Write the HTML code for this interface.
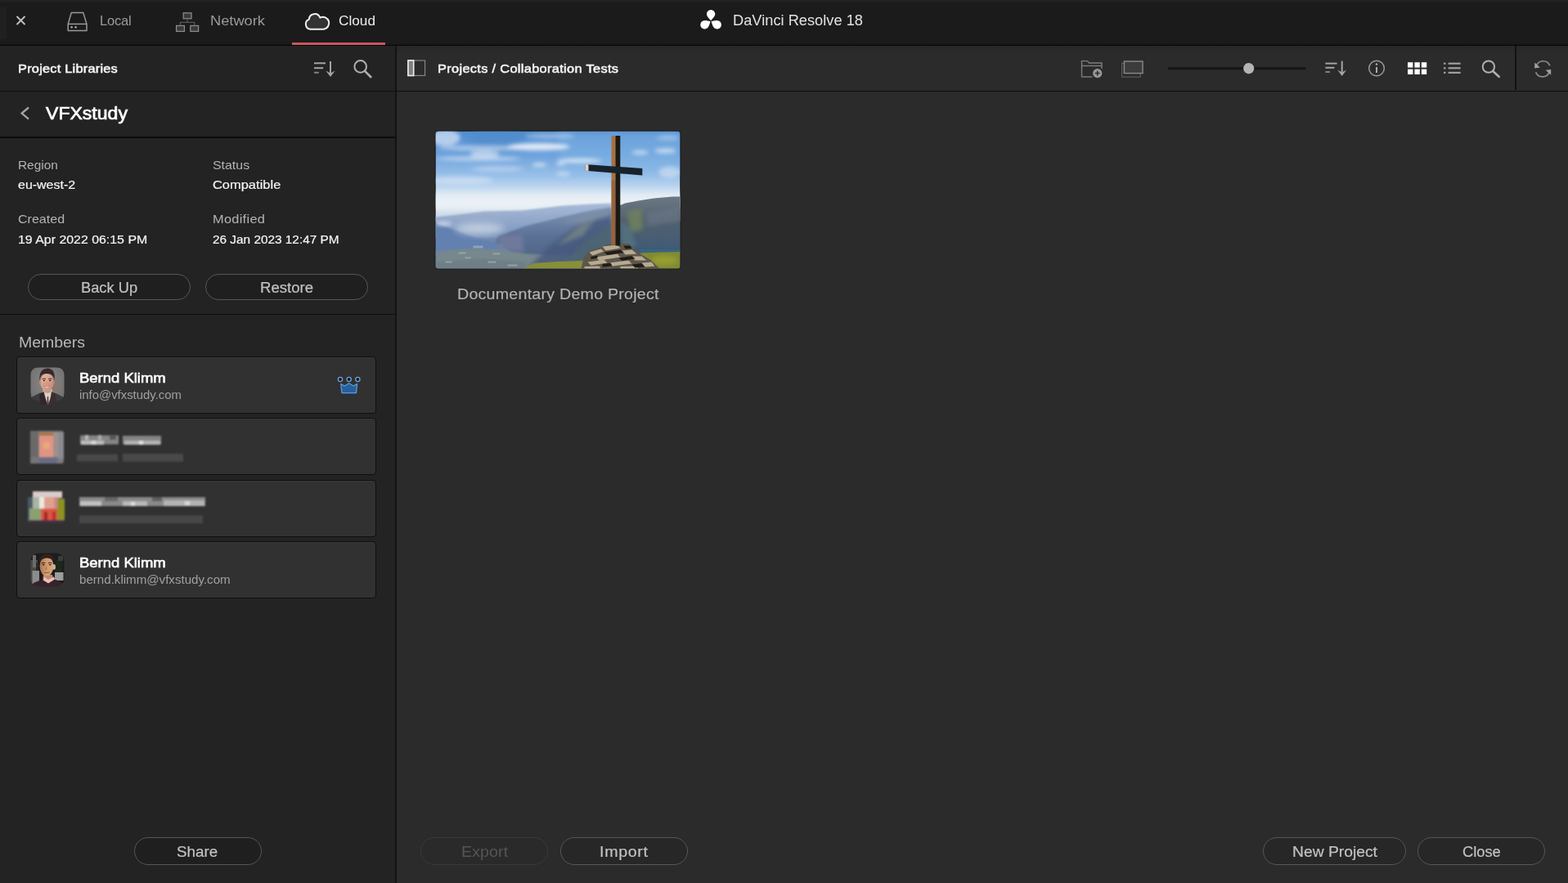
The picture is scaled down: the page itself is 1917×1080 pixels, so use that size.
<!DOCTYPE html>
<html lang="en"><head><meta charset="utf-8"><title>DaVinci Resolve 18</title>
<style>
html,body{margin:0;padding:0;}
body{width:1917px;height:1080px;overflow:hidden;background:#2b2b2b;position:relative;font-family:"Liberation Sans",sans-serif;}
.a{position:absolute;}
.t{position:absolute;white-space:pre;transform-origin:0 0;font-family:"Liberation Sans",sans-serif;}
svg{position:absolute;overflow:visible;}
.btn{position:absolute;box-sizing:border-box;border:1.8px solid #565656;border-radius:17px;height:33.4px;background:#1f1f1f;}
.card{position:absolute;box-sizing:border-box;left:20px;width:440px;height:70px;border:1.5px solid #0e0e0e;border-radius:4px;background:#313131;box-shadow:inset 0 1px 0 rgba(255,255,255,.035);}

</style></head>
<body>
<!-- panels -->
<div class="a" style="left:0;top:56px;width:483px;height:1024px;background:#232323"></div>
<div class="a" style="left:485px;top:56px;width:1432px;height:1024px;background:#2b2b2b"></div>
<div class="a" style="left:485px;top:56px;width:1432px;height:10px;background:linear-gradient(#272727,#2b2b2b)"></div>
<div class="a" style="left:483px;top:56px;width:2px;height:1024px;background:#121212"></div>
<!-- title bar -->
<div class="a" style="left:0;top:0;width:1917px;height:56px;background:#1b1b1b"></div>
<div class="a" style="left:0;top:0;width:1917px;height:4px;background:linear-gradient(#242424,#1b1b1b)"></div>
<div class="a" style="left:0;top:52px;width:1917px;height:3px;background:linear-gradient(#1b1b1b,#161616)"></div>
<div class="a" style="left:0;top:54.7px;width:1917px;height:1.3px;background:#070707"></div>
<div class="a" style="left:357px;top:51.5px;width:114.2px;height:3.2px;background:#cb5560"></div>
<!-- left strip --><div class="a" style="left:0;top:8px;width:8px;height:40px;background:#202020"></div>
<!-- header separators -->
<div class="a" style="left:0;top:110.5px;width:1917px;height:1.5px;background:#0f0f0f"></div>
<div class="a" style="left:0;top:167.3px;width:483px;height:1.5px;background:#0c0c0c"></div>
<div class="a" style="left:0;top:383.6px;width:483px;height:1.5px;background:#0e0e0e"></div>
<div class="a" style="left:1852px;top:56px;width:2px;height:54px;background:#121212"></div>
<!-- buttons -->
<div class="btn" style="left:34px;top:335px;width:199px;height:32px;border-radius:16px"></div>
<div class="btn" style="left:251px;top:335px;width:199px;height:32px;border-radius:16px"></div>
<div class="btn" style="left:164px;top:1024.3px;width:156px"></div>
<div class="btn" style="left:514px;top:1024.3px;width:156px;background:#2a2a2a;border-color:#393939"></div>
<div class="btn" style="left:685px;top:1024.3px;width:156px;background:#272727"></div>
<div class="btn" style="left:1544px;top:1024.3px;width:175px;background:#272727"></div>
<div class="btn" style="left:1733px;top:1024.3px;width:156px;background:#272727"></div>
<!-- cards -->
<div class="card" style="top:436px"></div>
<div class="card" style="top:511.3px"></div>
<div class="card" style="top:586.7px"></div>
<div class="card" style="top:662px"></div>

<!--ICONS-->
<svg class="a" style="left:530.6px;top:158.6px" width="302" height="171" viewBox="-1.5 -1.5 302 171">
<defs>
<clipPath id="tc"><rect x="0" y="0" width="299" height="168" rx="3.5"/></clipPath>
<linearGradient id="sky" x1="0" y1="0" x2="0" y2="100" gradientUnits="userSpaceOnUse">
<stop offset="0" stop-color="#528dd1"/><stop offset="0.3" stop-color="#6ea3dc"/><stop offset="0.56" stop-color="#9cc2ea"/><stop offset="0.76" stop-color="#d2e2f2"/><stop offset="0.9" stop-color="#e4ecf4"/><stop offset="1" stop-color="#cfdbe8"/>
</linearGradient>
<linearGradient id="far" x1="0" y1="88" x2="0" y2="128" gradientUnits="userSpaceOnUse">
<stop offset="0" stop-color="#a9bbd6"/><stop offset="1" stop-color="#7d96c0"/>
</linearGradient>
<linearGradient id="mid" x1="0" y1="95" x2="0" y2="168" gradientUnits="userSpaceOnUse">
<stop offset="0" stop-color="#7d93b6"/><stop offset="0.45" stop-color="#5b7196"/><stop offset="1" stop-color="#4b6080"/>
</linearGradient>
<linearGradient id="rm" x1="0" y1="80" x2="0" y2="150" gradientUnits="userSpaceOnUse">
<stop offset="0" stop-color="#6d7884"/><stop offset="0.4" stop-color="#536270"/><stop offset="1" stop-color="#3e5876"/>
</linearGradient>
<filter id="b2" x="-20%" y="-80%" width="140%" height="260%"><feGaussianBlur stdDeviation="2.4"/></filter>
<filter id="b1" x="-10%" y="-10%" width="120%" height="120%"><feGaussianBlur stdDeviation="1.1"/></filter>
<filter id="b05" x="-10%" y="-10%" width="120%" height="120%"><feGaussianBlur stdDeviation=".5"/></filter>
<filter id="b4" x="-30%" y="-100%" width="160%" height="300%"><feGaussianBlur stdDeviation="4.5"/></filter>
</defs>
<rect x="-1" y="-1" width="301" height="170" rx="4.5" fill="#1c1c1c"/>
<g clip-path="url(#tc)">
<rect x="0" y="100" width="299" height="68" fill="#7086a8"/>
<rect x="0" y="0" width="299" height="110" fill="url(#sky)"/>
<ellipse cx="75" cy="10" rx="35" ry="14" fill="#4f8acb" opacity=".7" filter="url(#b4)"/>
<rect x="150" y="0" width="150" height="50" fill="#86b8e6" opacity=".45" filter="url(#b4)"/>
<!-- clouds -->
<g fill="#f2f4fb" filter="url(#b2)">
<ellipse cx="12" cy="8" rx="18" ry="10" opacity=".6"/>
<ellipse cx="60" cy="20.5" rx="56" ry="3.2" opacity=".5"/>
<ellipse cx="126" cy="19" rx="38" ry="4.6" opacity=".85"/>
<ellipse cx="176" cy="36" rx="27" ry="2.6" opacity=".75"/>
<ellipse cx="60" cy="28" rx="18" ry="4.5" opacity=".55"/>
<ellipse cx="52" cy="33.5" rx="52" ry="2.8" opacity=".55"/>
<ellipse cx="76" cy="46" rx="32" ry="3.5" opacity=".35"/>
<ellipse cx="127" cy="41" rx="9" ry="2.2" opacity=".7"/>
<ellipse cx="153" cy="40" rx="6" ry="2" opacity=".6"/>
<ellipse cx="156" cy="52" rx="9" ry="2.8" opacity=".5"/>
<ellipse cx="140" cy="6" rx="30" ry="3" opacity=".4"/>
<ellipse cx="250" cy="26" rx="10" ry="2.8" opacity=".6"/>
<ellipse cx="281" cy="24" rx="13" ry="3.2" opacity=".6"/>
<ellipse cx="284" cy="8" rx="14" ry="3" opacity=".35"/>
<ellipse cx="286" cy="50" rx="13" ry="7" opacity=".45"/>
<ellipse cx="30" cy="60" rx="40" ry="5" opacity=".4"/>
</g>
<!-- horizon haze -->
<rect x="-10" y="76" width="320" height="20" fill="#eef3f7" opacity=".7" filter="url(#b4)"/>
<!-- far ridge -->
<path d="M0 105 L27 102 L60 98 L106 97 L156 91 L190 89 L215 88 L215 130 L0 130 Z" fill="url(#far)" filter="url(#b1)"/>
<!-- mid ridge -->
<path d="M60 168 L77 128 L110 116 L150 106 L185 98 L215 93 L215 168 Z" fill="url(#mid)" filter="url(#b1)"/>
<!-- left slope -->
<path d="M0 113 L10 116 L27 122 L50 131 L80 138 L95 150 L0 152 Z" fill="#6280b0" filter="url(#b1)"/>
<ellipse cx="54" cy="119" rx="30" ry="7" fill="#c8d4e0" opacity=".85" filter="url(#b4)"/>
<ellipse cx="10" cy="113" rx="10" ry="2.5" fill="#dfe6f2" opacity=".8" filter="url(#b2)"/>
<path d="M77 128 L106 127 L108 148 L76 146 Z" fill="#7a7fa0" opacity=".7" filter="url(#b2)"/>
<!-- valley -->
<path d="M0 147 L40 143 L80 145 L112 150 L160 152 L215 150 L215 168 L0 168 Z" fill="#77878e" filter="url(#b1)"/>
<path d="M0 160 L60 156 L110 160 L110 168 L0 168 Z" fill="#6c7e84" opacity=".8" filter="url(#b1)"/>
<g fill="#b4c0c2" opacity=".55" filter="url(#b05)">
<rect x="28" y="148" width="9" height="2"/><rect x="12" y="159" width="8" height="2"/><rect x="46" y="140" width="12" height="3"/><rect x="64" y="159" width="10" height="2"/><rect x="88" y="163" width="12" height="2"/><rect x="36" y="154" width="7" height="1.6"/><rect x="70" y="149" width="9" height="1.8"/>
</g>
<!-- dark ridges center-right -->
<path d="M112 168 L140 140 L170 118 L200 104 L215 100 L215 168 Z" fill="#46597e" opacity=".8" filter="url(#b2)"/>
<path d="M150 168 L185 132 L215 112 L215 168 Z" fill="#4e6672" opacity=".85" filter="url(#b2)"/>
<path d="M148 140 L175 116 L196 106 L180 128 Z" fill="#7c8c84" opacity=".7" filter="url(#b2)"/>
<path d="M150 112 L190 100 L214 96 L214 104 L180 112 Z" fill="#7f90a4" opacity=".8" filter="url(#b2)"/>
<!-- right mountain -->
<path d="M222 92 L232 88 L248 85 L267 82 L290 80 L299 80 L299 152 L222 152 Z" fill="url(#rm)" filter="url(#b05)"/>
<path d="M234 98 L252 94 L254 120 L238 124 Z" fill="#72845c" opacity=".75" filter="url(#b2)"/>
<path d="M226 112 L236 116 L246 140 L228 146 Z" fill="#5a7c84" opacity=".6" filter="url(#b2)"/>
<path d="M258 100 L299 92 L299 110 L258 116 Z" fill="#6c7888" opacity=".6" filter="url(#b2)"/>
<rect x="250" y="144.5" width="50" height="4" fill="#356a82" opacity=".8" filter="url(#b05)"/>
<!-- grass -->
<path d="M106 168 L120 161.5 L148 159.5 L190 158 L190 168 Z" fill="#878f38" filter="url(#b05)"/>
<path d="M250 149 L275 148 L299 147.6 L299 168 L250 168 Z" fill="#818a30" filter="url(#b05)"/>
<ellipse cx="280" cy="158" rx="16" ry="6" fill="#9aa232" opacity=".8" filter="url(#b2)"/>
<!-- rocks -->
<path d="M178 168 L181 155 L187 147 L198 143 L213 137.5 L236 137.5 L240 141.5 L251 150.5 L263 157.5 L274 168 Z" fill="#5e564a"/>
<g fill="#b6aa92" filter="url(#b05)">
<path d="M188 148 L202 144 L206 147 L192 152 Z"/><path d="M204 141 L222 139 L226 143 L208 146 Z"/><path d="M196 154 L222 150 L226 154 L200 158 Z"/><path d="M186 160 L206 157 L210 161 L190 164 Z"/><path d="M212 161 L236 158 L240 162 L216 165 Z"/><path d="M228 146 L240 145 L246 150 L232 151 Z"/><path d="M238 153 L252 153 L258 158 L244 158 Z"/><path d="M252 161 L264 160 L268 165 L256 166 Z"/><path d="M182 165.5 L200 165 L202 168 L182 168 Z"/><path d="M226 165.5 L246 165 L248 168 L226 168 Z"/>
</g>
<g fill="#221d19" filter="url(#b05)">
<path d="M206 148 L226 145 L230 148.6 L210 151.6 Z"/><path d="M224 155 L240 152.5 L244 156 L228 158.6 Z"/><path d="M204 162.6 L214 161 L216 165 L204 166 Z"/><path d="M240 163 L252 161.6 L256 166 L244 167 Z"/><path d="M230 140 L238 140 L240 143.6 L232 144 Z"/><path d="M190 153.4 L198 152 L198 155 L190 156.6 Z"/>
</g>
<!-- cross -->
<rect x="215" y="5.5" width="5.2" height="133" fill="#a8703f"/>
<rect x="215" y="60" width="5.2" height="78" fill="#8c5a3a" opacity=".6"/>
<rect x="220" y="5.5" width="5.8" height="134.5" fill="#1b1913"/>
<path d="M183 40.4 L252.8 45.6 L252.8 54 L183 48.2 Z" fill="#17222b"/>
<path d="M183 40.4 L187 40.7 L187 48.5 L183 48.2 Z" fill="#e6cfc8"/>
</g>
</svg>
<!-- avatar 1 -->
<svg class="a" style="left:37px;top:449px" width="42" height="47" viewBox="0 0 42 47">
<defs><clipPath id="a1"><path d="M10 0.5 H32 Q41.5 0.5 41.5 10 V31 Q41.5 41.5 32 41.5 H27.5 V46 H11 V41.5 H10 Q0.5 41.5 0.5 31 V10 Q0.5 0.5 10 0.5 Z"/></clipPath>
<filter id="ab" x="-10%" y="-10%" width="120%" height="120%"><feGaussianBlur stdDeviation=".55"/></filter>
<linearGradient id="sk1" x1="0" y1="0" x2="1" y2="1"><stop offset="0" stop-color="#e8bba2"/><stop offset="1" stop-color="#c48a76"/></linearGradient>
<radialGradient id="bg1" cx=".5" cy=".4" r=".7"><stop offset="0" stop-color="#8a8a8a"/><stop offset="1" stop-color="#6c6c6c"/></radialGradient>
</defs>
<g clip-path="url(#a1)"><g filter="url(#ab)">
<rect width="42" height="47" fill="url(#bg1)"/>
<rect x="27.5" y="15" width="8" height="15" fill="#8c7466" opacity=".6"/>
<path d="M-2 47 L1 37 L12 31.5 L30 31.5 L41 37 L44 47 Z" fill="#3b3b40"/>
<path d="M15.5 27 H26.5 L27 33 L21.5 46 L16 34 Z" fill="#dccfc8"/>
<path d="M16.5 27 H25.5 V30.5 Q21 33 16.5 30.5 Z" fill="#c79a86"/>
<path d="M11.5 33 L16.5 30 L21 47 H11.5 Z" fill="#33282a"/><path d="M31 33 L26 30 L23 47 H31 Z" fill="#3c2e2c"/>
<path d="M20.8 36 L22.2 36 L22.6 47 L20.2 47 Z" fill="#55433e"/>
<ellipse cx="20.4" cy="18.4" rx="8" ry="10.8" fill="url(#sk1)"/>
<ellipse cx="12.3" cy="18.5" rx="1.2" ry="2.4" fill="#c88f7c"/><ellipse cx="28.4" cy="18.5" rx="1.2" ry="2.4" fill="#c08672"/>
<ellipse cx="17" cy="21" rx="2.6" ry="2" fill="#e48a84" opacity=".55"/><ellipse cx="24.2" cy="21" rx="2.4" ry="2" fill="#dc8880" opacity=".5"/>
<path d="M14.4 14.6 Q16.8 13.2 19 14.6" stroke="#4a3028" stroke-width="1" fill="none"/><path d="M22 14.6 Q24.2 13.2 26.6 14.6" stroke="#4a3028" stroke-width="1" fill="none"/>
<ellipse cx="16.8" cy="16.4" rx="1.3" ry=".8" fill="#3a2824"/><ellipse cx="24.2" cy="16.4" rx="1.3" ry=".8" fill="#3a2824"/>
<path d="M20.4 17 L19.4 21.4 H21.6 Z" fill="#c98c78" opacity=".7"/>
<path d="M16.4 23.2 Q20.5 27.6 24.6 23.2 Q20.5 24.6 16.4 23.2Z" fill="#fbf3f0" stroke="#a85a56" stroke-width=".5"/>
<path d="M11.6 17 Q10 2 21 1.4 Q31.4 2 29.4 16 Q28.6 9.6 24 8.4 Q17 7 13.6 10 Q12 12.6 11.6 17 Z" fill="#3a282a"/>
</g></g>
</svg>
<!-- avatar 2 (pixelated) -->
<svg class="a" style="left:36px;top:525px" width="44" height="44" viewBox="0 0 44 44">
<defs><filter id="pb" x="-10%" y="-10%" width="120%" height="120%"><feGaussianBlur stdDeviation="1"/></filter></defs>
<g filter="url(#pb)">
<rect x="1" y="2" width="41" height="40" rx="3" fill="#7c7c7c"/>
<rect x="1" y="2" width="10" height="40" fill="#6a6a6a"/>
<rect x="12" y="4" width="17" height="6" fill="#a87848"/>
<rect x="12" y="8" width="17" height="26" fill="#e09484"/>
<rect x="17" y="16" width="8" height="8" fill="#e8a878"/>
<rect x="29" y="4" width="6" height="30" fill="#a0908c"/>
<rect x="35" y="4" width="7" height="32" fill="#8a8a92"/>
<rect x="12" y="34" width="22" height="8" fill="#6a6c84"/>
<rect x="1" y="34" width="11" height="8" fill="#747478"/>
</g>
</svg>
<!-- avatar 3 (pixelated) -->
<svg class="a" style="left:32px;top:598px" width="50" height="46" viewBox="0 0 50 46">
<g filter="url(#pb)">
<rect x="8" y="3" width="36" height="8" fill="#d8cccc"/>
<rect x="2" y="10" width="8" height="30" fill="#4a5a68"/>
<rect x="8" y="10" width="10" height="14" fill="#a8b4a4"/>
<rect x="16" y="10" width="8" height="22" fill="#ece8e0"/>
<rect x="22" y="10" width="12" height="14" fill="#e0a090"/>
<rect x="34" y="10" width="6" height="14" fill="#d08888"/>
<rect x="38" y="12" width="9" height="26" fill="#8e9222"/>
<rect x="4" y="24" width="14" height="14" fill="#8aa070"/>
<rect x="18" y="24" width="20" height="14" fill="#d85444"/>
<rect x="22" y="28" width="4" height="10" fill="#a02820"/><rect x="32" y="28" width="4" height="10" fill="#b83028"/>
<rect x="4" y="38" width="42" height="3" fill="#4a3050"/>
</g>
</svg>
<!-- avatar 4 -->
<svg class="a" style="left:37px;top:676px" width="42" height="42" viewBox="0 0 42 42">
<defs><clipPath id="a4"><rect x="0.5" y="0.5" width="41" height="41" rx="9.5"/></clipPath>
<linearGradient id="sk4" x1="0" y1="0" x2="1" y2="0"><stop offset="0" stop-color="#a87450"/><stop offset=".45" stop-color="#cf9a70"/><stop offset="1" stop-color="#d8a680"/></linearGradient>
</defs>
<g clip-path="url(#a4)"><g filter="url(#ab)">
<rect width="42" height="42" fill="#1b1b1b"/>
<rect x="0" y="9" width="9" height="33" fill="#4a4a46"/><rect x="2.5" y="22" width="8.5" height="18" fill="#8c8c8c"/><rect x="3" y="3" width="4" height="15" fill="#6c6c6c"/><rect x="7" y="12" width="3" height="10" fill="#2a2a2a"/>
<rect x="31" y="9" width="8" height="15" fill="#1c2a1a"/><rect x="30" y="24" width="10.5" height="10" fill="#9c9e9e"/><rect x="34" y="4" width="6" height="6" fill="#3a3a3a"/>
<path d="M-2 42 L5 36.5 L14 33 L28 32 L36.5 35 L44 42 Z" fill="#38202a"/>
<path d="M16 27 H27 L28 31 L21.5 35 L15.5 32 Z" fill="#c08c66"/>
<path d="M17 29.6 L22 33 L29 29.4 L30 32.4 L22 37.4 L15.6 33.6 Z" fill="#ecbcc4"/>
<ellipse cx="20" cy="16.6" rx="8.4" ry="12" fill="url(#sk4)"/>
<ellipse cx="29.2" cy="17.4" rx="1.7" ry="3.4" fill="#dcae90"/>
<path d="M13.6 12.8 Q16 11.6 18.4 12.8" stroke="#3c2418" stroke-width="1" fill="none"/><path d="M21.8 12.8 Q24.2 11.6 26.6 12.8" stroke="#3c2418" stroke-width="1" fill="none"/>
<ellipse cx="16.2" cy="14.8" rx="1.5" ry=".8" fill="#2c1c14"/><ellipse cx="24.2" cy="14.8" rx="1.5" ry=".8" fill="#2c1c14"/>
<path d="M19.6 15 L18 21 H20.6 Z" fill="#a06c4c" opacity=".7"/>
<path d="M16.8 24 Q20 25.2 23.4 24" stroke="#8a4c3c" stroke-width=".9" fill="none"/>
<path d="M11 12 Q10.6 1.6 20.5 1.4 Q30.4 1.6 29.4 12.6 Q27.6 6.8 20 6.4 Q14.4 6.6 11 12 Z" fill="#33221c"/>
</g></g>
</svg>
<!-- blurred texts -->
<svg class="a" style="left:90px;top:525px" width="180" height="125" viewBox="90 525 180 125">
<g filter="url(#pb)">
<rect x="98" y="532.5" width="47" height="11" fill="#868686"/><rect x="150" y="533" width="47" height="10.5" fill="#848484"/>
<rect x="99" y="539" width="28" height="5" fill="#bcbcbc"/><rect x="152" y="539" width="44" height="5" fill="#b4b4b4"/>
<rect x="104" y="532" width="4" height="6" fill="#b8b8b8"/><rect x="120" y="532" width="4" height="6" fill="#aaaaaa"/><rect x="134" y="532" width="8" height="6" fill="#585858"/>
<rect x="170" y="539" width="5" height="5" fill="#e0e0e0"/><rect x="112" y="539" width="5" height="5" fill="#d8d8d8"/>
<rect x="94" y="555.5" width="50" height="9" fill="#484848"/><rect x="150" y="555" width="74" height="9.5" fill="#4a4a4a"/>
<rect x="97" y="608" width="154" height="11" fill="#8a8a8a"/>
<rect x="98" y="613" width="26" height="6" fill="#c0c0c0"/><rect x="150" y="613" width="30" height="6" fill="#b8b8b8"/><rect x="200" y="612" width="50" height="7" fill="#b4b4b4"/>
<rect x="128" y="608" width="16" height="5" fill="#666666"/><rect x="186" y="608" width="12" height="5" fill="#5e5e5e"/>
<rect x="160" y="614" width="5" height="5" fill="#dedede"/><rect x="226" y="613" width="6" height="5" fill="#d8d8d8"/>
<rect x="97" y="630.5" width="151" height="9.5" fill="#474747"/>
</g>
</svg>
<svg class="a" style="left:0;top:0" width="1917" height="1080" viewBox="0 0 1917 1080">
<!-- close X -->
<path d="M20.5 20 L30.5 30 M30.5 20 L20.5 30" stroke="#c4c4c4" stroke-width="1.8" fill="none"/>
<!-- local drive -->
<g stroke="#9a9a9a" stroke-width="1.5" fill="none" stroke-linejoin="round">
<path d="M87.2 15.6 H101.8 L106 29.4 V37.4 H83.2 V29.4 Z"/>
<path d="M83.2 29.4 H106"/>
</g>
<circle cx="87.6" cy="33.3" r="1.2" fill="#b0b0b0"/><circle cx="92.6" cy="33.3" r="1.2" fill="#b0b0b0"/>
<!-- network -->
<g stroke="#8c8c8c" stroke-width="1.25" fill="#3a3a3a">
<rect x="224.2" y="15.8" width="9.8" height="7"/>
<rect x="215.6" y="31.4" width="9.8" height="7"/>
<rect x="232.8" y="31.4" width="9.8" height="7"/>
</g>
<path d="M229.1 23.5 V27.3 M220.5 31 V27.3 H237.7 V31" stroke="#565656" stroke-width="1.3" fill="none"/>
<!-- cloud -->
<path d="M379.5 35.7 A6.3 6.3 0 0 1 377.8 23.6 A7 7 0 0 1 391.3 21.6 A7.5 7.5 0 1 1 395.5 35.7 Z" stroke="#f0f0f0" stroke-width="2" fill="#333333" stroke-linejoin="round"/>
<!-- davinci logo -->
<g transform="translate(869.1 25.9) scale(0.96)" fill="#ffffff">
<path id="petal" d="M0 -0.6 C-2.2 -3.2 -5.4 -6 -5.4 -9.2 A5.4 5.4 0 0 1 5.4 -9.2 C5.4 -6 2.2 -3.2 0 -0.6 Z"/>
<path transform="rotate(120)" d="M0 -0.6 C-2.2 -3.2 -5.4 -6 -5.4 -9.2 A5.4 5.4 0 0 1 5.4 -9.2 C5.4 -6 2.2 -3.2 0 -0.6 Z"/>
<path transform="rotate(240)" d="M0 -0.6 C-2.2 -3.2 -5.4 -6 -5.4 -9.2 A5.4 5.4 0 0 1 5.4 -9.2 C5.4 -6 2.2 -3.2 0 -0.6 Z"/>
</g>
<!-- left sort -->
<g stroke="#a4a4a4" stroke-width="2" fill="none">
<path d="M384 77.3 H398"/><path d="M384 83.2 H395.2"/><path d="M384 88.8 H389.8" stroke="#808080"/>
<path d="M404 75 V90"/>
</g>
<path d="M398.3 86.6 L404 94 L409.7 86.6 L404 89.4 Z" fill="#a4a4a4"/>
<!-- left search -->
<circle cx="440.7" cy="81.4" r="7.3" stroke="#b0b0b0" stroke-width="2" fill="none"/>
<path d="M446 86.9 L453.4 94.2" stroke="#b0b0b0" stroke-width="2.6" stroke-linecap="round"/>
<!-- back chevron -->
<path d="M35 131.5 L26.6 138.6 L35 145.6" stroke="#a4a4a4" stroke-width="2.3" fill="none"/>
<!-- panel toggle -->
<rect x="499" y="74" width="20.6" height="18.4" stroke="#8c8c8c" stroke-width="1.1" fill="none"/>
<rect x="498.9" y="73.9" width="6.8" height="18.6" stroke="#f0f0f0" stroke-width="1.6" fill="#808080"/>
<!-- folder plus -->
<g stroke="#7e7e7e" stroke-width="1.4" fill="none" stroke-linejoin="round">
<path d="M1322.5 94 V74.6 H1329.5 L1331.5 77 H1347 V84"/>
<path d="M1322.5 80.5 H1347"/>
<path d="M1322.5 94 H1335.5"/>
</g>
<circle cx="1341.7" cy="89.6" r="5.6" fill="#9a9a9a"/>
<path d="M1338.7 89.6 H1344.7 M1341.7 86.6 V92.6" stroke="#2a2a2a" stroke-width="1.5"/>
<!-- screen icon -->
<rect x="1371.6" y="77.4" width="22.6" height="16.8" stroke="#5a5a5a" stroke-width="1.2" fill="none"/>
<rect x="1374.4" y="75" width="22.6" height="14.6" stroke="#8a8a8a" stroke-width="1.4" fill="#3c3c3c"/>
<!-- slider -->
<rect x="1427.5" y="82.2" width="169" height="3" rx="1.5" fill="#151515"/>
<circle cx="1526.7" cy="83.6" r="6.6" fill="#b4b4b4"/>
<!-- right sort -->
<g stroke="#a4a4a4" stroke-width="2" fill="none">
<path d="M1620.4 77.6 H1634.6"/><path d="M1620.4 82.8 H1631.4"/><path d="M1620.4 88 H1626" stroke="#808080"/>
<path d="M1640.7 74.6 V89"/>
</g>
<path d="M1635.2 85.6 L1640.7 93 L1646.2 85.6 L1640.7 88.4 Z" fill="#a4a4a4"/>
<!-- info -->
<circle cx="1683" cy="83.5" r="9.3" stroke="#9a9a9a" stroke-width="1.5" fill="none"/>
<path d="M1683 82 V89" stroke="#a8a8a8" stroke-width="2"/><circle cx="1683" cy="78.6" r="1.3" fill="#a8a8a8"/>
<!-- grid -->
<g fill="#ffffff">
<rect x="1721" y="76.2" width="6.4" height="6.4"/><rect x="1729.4" y="76.2" width="6.4" height="6.4"/><rect x="1737.8" y="76.2" width="6.4" height="6.4"/>
<rect x="1721" y="84.6" width="6.4" height="6.4"/><rect x="1729.4" y="84.6" width="6.4" height="6.4"/><rect x="1737.8" y="84.6" width="6.4" height="6.4"/>
</g>
<!-- list -->
<g fill="#a0a0a0">
<rect x="1765" y="76.6" width="2.4" height="2.2"/><rect x="1770.6" y="76.6" width="15" height="2.2"/>
<rect x="1765" y="82.2" width="2.4" height="2.2"/><rect x="1770.6" y="82.2" width="15" height="2.2"/>
<rect x="1765" y="87.8" width="2.4" height="2.2"/><rect x="1770.6" y="87.8" width="15" height="2.2"/>
</g>
<!-- right search -->
<circle cx="1819.9" cy="81.6" r="7.2" stroke="#b0b0b0" stroke-width="2" fill="none"/>
<path d="M1825.2 87 L1832.6 93.8" stroke="#b0b0b0" stroke-width="2.6" stroke-linecap="round"/>
<!-- refresh -->
<g stroke="#8e8e8e" stroke-width="1.7" fill="none">
<path d="M1878 81.6 A8.8 8.8 0 0 1 1894.8 80.4"/>
<path d="M1894.4 87 A8.8 8.8 0 0 1 1877.6 88.2"/>
</g>
<path d="M1876.2 76.6 V83.4 L1882.8 82.6 Z" fill="#a0a0a0"/>
<path d="M1896.2 91.8 V85 L1889.6 85.8 Z" fill="#a0a0a0"/>
<!-- crown -->
<path d="M416.8 469.6 L421.3 472 L426.7 468.8 L432.1 472 L436.6 469.6 L435.4 480.6 H418 Z" fill="#27609c" stroke="#5c9bd6" stroke-width="1.3" stroke-linejoin="round"/>
<g fill="#101828" stroke="#6ea2d8" stroke-width="1.3">
<circle cx="416" cy="464" r="2.6"/><circle cx="426.7" cy="464" r="2.6"/><circle cx="437.4" cy="464" r="2.6"/>
</g>
<path d="M418 484.4 H435.4" stroke="#1c3450" stroke-width="1.6"/>
</svg>

<span class="t" style="left:122.3px;top:16.8px;font-size:17px;line-height:17px;font-weight:400;color:#9a9a9a;letter-spacing:-0.21px;transform:scaleX(0.970);">Local</span>
<span class="t" style="left:256.6px;top:16.8px;font-size:17px;line-height:17px;font-weight:400;color:#9a9a9a;letter-spacing:0.00px;transform:scaleX(1.074);">Network</span>
<span class="t" style="left:414.4px;top:16.8px;font-size:17px;line-height:17px;font-weight:400;color:#ececec;letter-spacing:0.00px;transform:scaleX(1.013);">Cloud</span>
<span class="t" style="left:896.0px;top:16.3px;font-size:18px;line-height:18px;font-weight:400;color:#e2e2e2;letter-spacing:0.00px;transform:scaleX(1.014);">DaVinci Resolve 18</span>
<span class="t" style="left:21.9px;top:76.4px;font-size:15px;line-height:15px;font-weight:400;color:#f4f4f4;letter-spacing:0.21px;transform:scaleX(1.090);-webkit-text-stroke:0.55px #f4f4f4;">Project Libraries</span>
<span class="t" style="left:535.0px;top:76.4px;font-size:15px;line-height:15px;font-weight:400;color:#f4f4f4;letter-spacing:0.30px;transform:scaleX(1.090);-webkit-text-stroke:0.55px #f4f4f4;">Projects / Collaboration Tests</span>
<span class="t" style="left:56.0px;top:127.7px;font-size:22px;line-height:22px;font-weight:400;color:#ffffff;letter-spacing:0.00px;transform:scaleX(1.048);-webkit-text-stroke:0.7px #ffffff;">VFXstudy</span>
<span class="t" style="left:21.5px;top:194.2px;font-size:15px;line-height:15px;font-weight:400;color:#b4b4b4;letter-spacing:0.00px;transform:scaleX(1.026);">Region</span>
<span class="t" style="left:21.5px;top:217.9px;font-size:15px;line-height:15px;font-weight:400;color:#f4f4f4;letter-spacing:0.00px;transform:scaleX(1.064);-webkit-text-stroke:0.2px #f4f4f4;">eu-west-2</span>
<span class="t" style="left:260.2px;top:194.2px;font-size:15px;line-height:15px;font-weight:400;color:#b4b4b4;letter-spacing:0.00px;transform:scaleX(1.060);">Status</span>
<span class="t" style="left:260.2px;top:217.9px;font-size:15px;line-height:15px;font-weight:400;color:#f4f4f4;letter-spacing:0.06px;transform:scaleX(1.090);-webkit-text-stroke:0.2px #f4f4f4;">Compatible</span>
<span class="t" style="left:21.5px;top:260.3px;font-size:15px;line-height:15px;font-weight:400;color:#b4b4b4;letter-spacing:-0.00px;transform:scaleX(1.070);">Created</span>
<span class="t" style="left:21.5px;top:284.8px;font-size:15px;line-height:15px;font-weight:400;color:#f4f4f4;letter-spacing:0.00px;transform:scaleX(1.060);-webkit-text-stroke:0.2px #f4f4f4;">19 Apr 2022 06:15 PM</span>
<span class="t" style="left:260.2px;top:260.3px;font-size:15px;line-height:15px;font-weight:400;color:#b4b4b4;letter-spacing:0.27px;transform:scaleX(1.090);">Modified</span>
<span class="t" style="left:260.2px;top:284.8px;font-size:15px;line-height:15px;font-weight:400;color:#f4f4f4;letter-spacing:0.00px;transform:scaleX(1.024);-webkit-text-stroke:0.2px #f4f4f4;">26 Jan 2023 12:47 PM</span>
<span class="t" style="left:99.2px;top:343.0px;font-size:18px;line-height:18px;font-weight:400;color:#c2c2c2;letter-spacing:0.00px;transform:scaleX(1.016);-webkit-text-stroke:0.2px #c2c2c2;">Back Up</span>
<span class="t" style="left:317.9px;top:343.0px;font-size:18px;line-height:18px;font-weight:400;color:#c2c2c2;letter-spacing:-0.00px;transform:scaleX(1.033);-webkit-text-stroke:0.2px #c2c2c2;">Restore</span>
<span class="t" style="left:23.3px;top:409.8px;font-size:18px;line-height:18px;font-weight:400;color:#b8b8b8;letter-spacing:0.00px;transform:scaleX(1.080);">Members</span>
<span class="t" style="left:96.9px;top:453.8px;font-size:17px;line-height:17px;font-weight:400;color:#ffffff;letter-spacing:0.00px;transform:scaleX(1.086);-webkit-text-stroke:0.6px #ffffff;">Bernd Klimm</span>
<span class="t" style="left:96.9px;top:474.8px;font-size:15px;line-height:15px;font-weight:400;color:#a0a0a0;letter-spacing:0.00px;transform:scaleX(0.993);">info@vfxstudy.com</span>
<span class="t" style="left:96.9px;top:680.0px;font-size:17px;line-height:17px;font-weight:400;color:#ffffff;letter-spacing:0.00px;transform:scaleX(1.086);-webkit-text-stroke:0.6px #ffffff;">Bernd Klimm</span>
<span class="t" style="left:96.9px;top:701.3px;font-size:15px;line-height:15px;font-weight:400;color:#a0a0a0;letter-spacing:0.00px;transform:scaleX(1.007);">bernd.klimm@vfxstudy.com</span>
<span class="t" style="left:216.3px;top:1032.8px;font-size:18px;line-height:18px;font-weight:400;color:#c2c2c2;letter-spacing:-0.00px;transform:scaleX(1.043);-webkit-text-stroke:0.2px #c2c2c2;">Share</span>
<span class="t" style="left:563.8px;top:1032.8px;font-size:18px;line-height:18px;font-weight:400;color:#555555;letter-spacing:0.09px;transform:scaleX(1.090);">Export</span>
<span class="t" style="left:733.0px;top:1032.8px;font-size:18px;line-height:18px;font-weight:400;color:#c2c2c2;letter-spacing:0.62px;transform:scaleX(1.090);-webkit-text-stroke:0.2px #c2c2c2;">Import</span>
<span class="t" style="left:1579.7px;top:1032.8px;font-size:18px;line-height:18px;font-weight:400;color:#c2c2c2;letter-spacing:0.00px;transform:scaleX(1.071);-webkit-text-stroke:0.2px #c2c2c2;">New Project</span>
<span class="t" style="left:1787.5px;top:1032.8px;font-size:18px;line-height:18px;font-weight:400;color:#c2c2c2;letter-spacing:0.00px;transform:scaleX(1.017);-webkit-text-stroke:0.2px #c2c2c2;">Close</span>
<span class="t" style="left:559.2px;top:351.0px;font-size:18px;line-height:18px;font-weight:400;color:#b4b4b4;letter-spacing:0.22px;transform:scaleX(1.090);-webkit-text-stroke:0.15px #b4b4b4;">Documentary Demo Project</span>
</body></html>
